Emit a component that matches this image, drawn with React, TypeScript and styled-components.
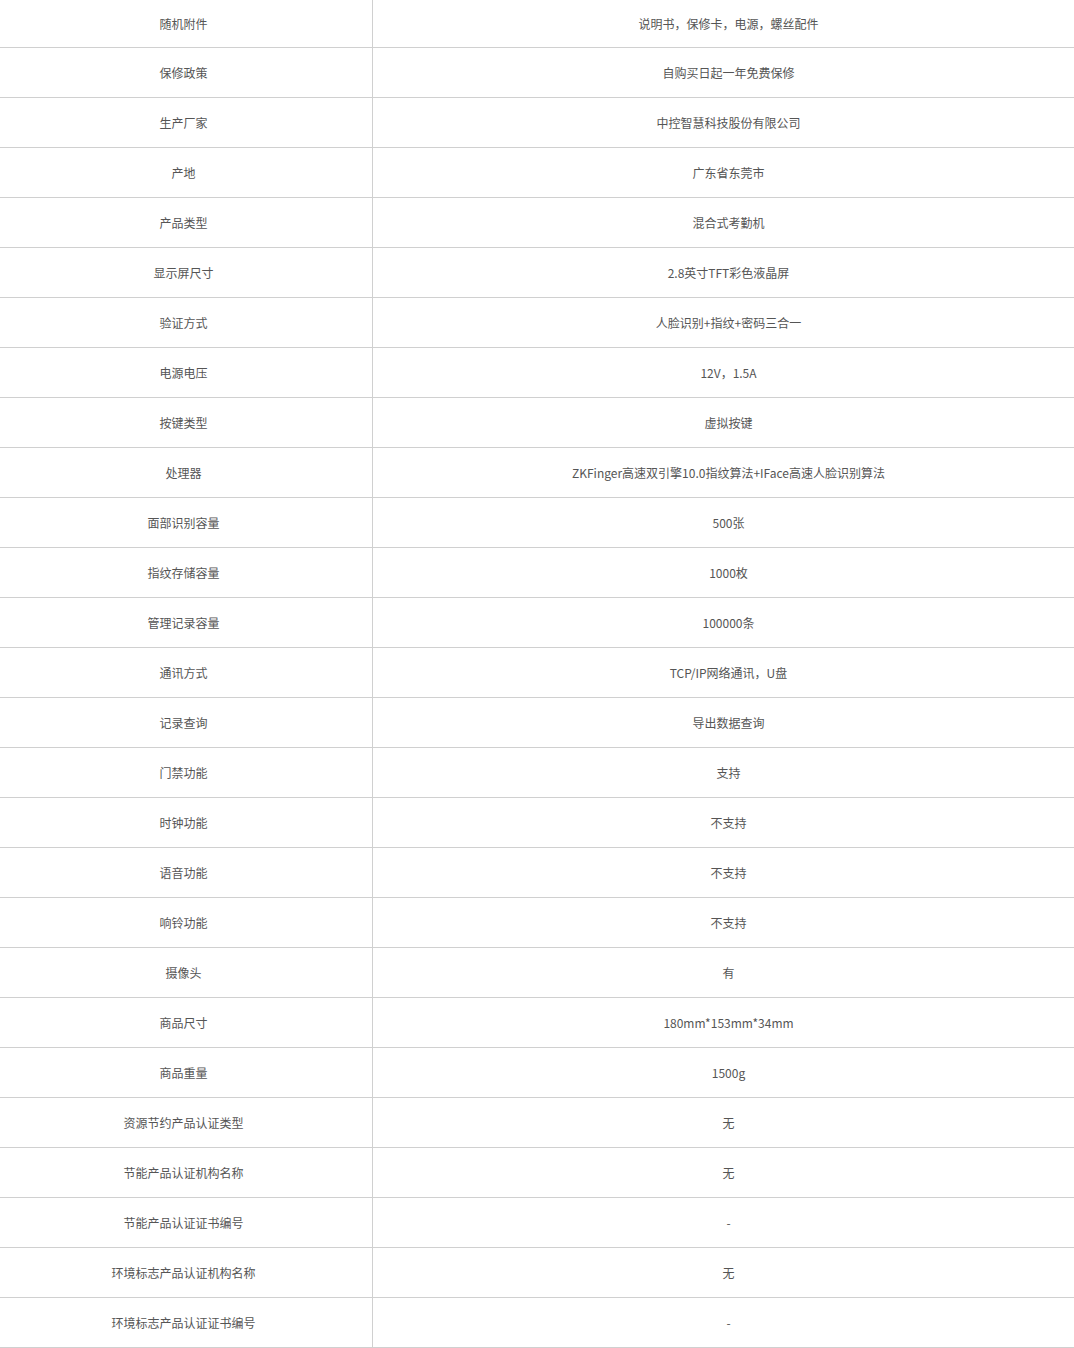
import React from "react";
import styled, { createGlobalStyle } from "styled-components";

const Global = createGlobalStyle`
  html, body { margin: 0; padding: 0; background: #fff; }
  *, *::before, *::after { box-sizing: border-box; }
  body { font-family: "Noto Sans CJK SC", "Noto Sans", sans-serif; }
`;

const Table = styled.div`
  width: 1074px;
  display: grid;
  grid-template-columns: 373px 1fr;
  font-size: 12px;
  color: #555;
`;

const Cell = styled.div<{ $first: boolean; $side: "l" | "r" }>`
  height: ${(p) => (p.$first ? 48 : 50)}px;
  display: flex;
  align-items: center;
  justify-content: center;
  border-bottom: 1px solid #d0d0d0;
  border-right: ${(p) => (p.$side === "l" ? "1px solid #d0d0d0" : "none")};
  padding: ${(p) => (p.$side === "l" ? "0 5px 0 0" : "0 0 0 10px")};
  white-space: nowrap;
  line-height: 1;
`;

const rows: [string, string][] = [
  ["随机附件", "说明书，保修卡，电源，螺丝配件"],
  ["保修政策", "自购买日起一年免费保修"],
  ["生产厂家", "中控智慧科技股份有限公司"],
  ["产地", "广东省东莞市"],
  ["产品类型", "混合式考勤机"],
  ["显示屏尺寸", "2.8英寸TFT彩色液晶屏"],
  ["验证方式", "人脸识别+指纹+密码三合一"],
  ["电源电压", "12V，1.5A"],
  ["按键类型", "虚拟按键"],
  ["处理器", "ZKFinger高速双引擎10.0指纹算法+IFace高速人脸识别算法"],
  ["面部识别容量", "500张"],
  ["指纹存储容量", "1000枚"],
  ["管理记录容量", "100000条"],
  ["通讯方式", "TCP/IP网络通讯，U盘"],
  ["记录查询", "导出数据查询"],
  ["门禁功能", "支持"],
  ["时钟功能", "不支持"],
  ["语音功能", "不支持"],
  ["响铃功能", "不支持"],
  ["摄像头", "有"],
  ["商品尺寸", "180mm*153mm*34mm"],
  ["商品重量", "1500g"],
  ["资源节约产品认证类型", "无"],
  ["节能产品认证机构名称", "无"],
  ["节能产品认证证书编号", "-"],
  ["环境标志产品认证机构名称", "无"],
  ["环境标志产品认证证书编号", "-"],
];

export default function App() {
  return (
    <>
      <Global />
      <Table>
        {rows.map(([k, v], i) => (
          <React.Fragment key={k}>
            <Cell $first={i === 0} $side="l">{k}</Cell>
            <Cell $first={i === 0} $side="r">{v}</Cell>
          </React.Fragment>
        ))}
      </Table>
    </>
  );
}
